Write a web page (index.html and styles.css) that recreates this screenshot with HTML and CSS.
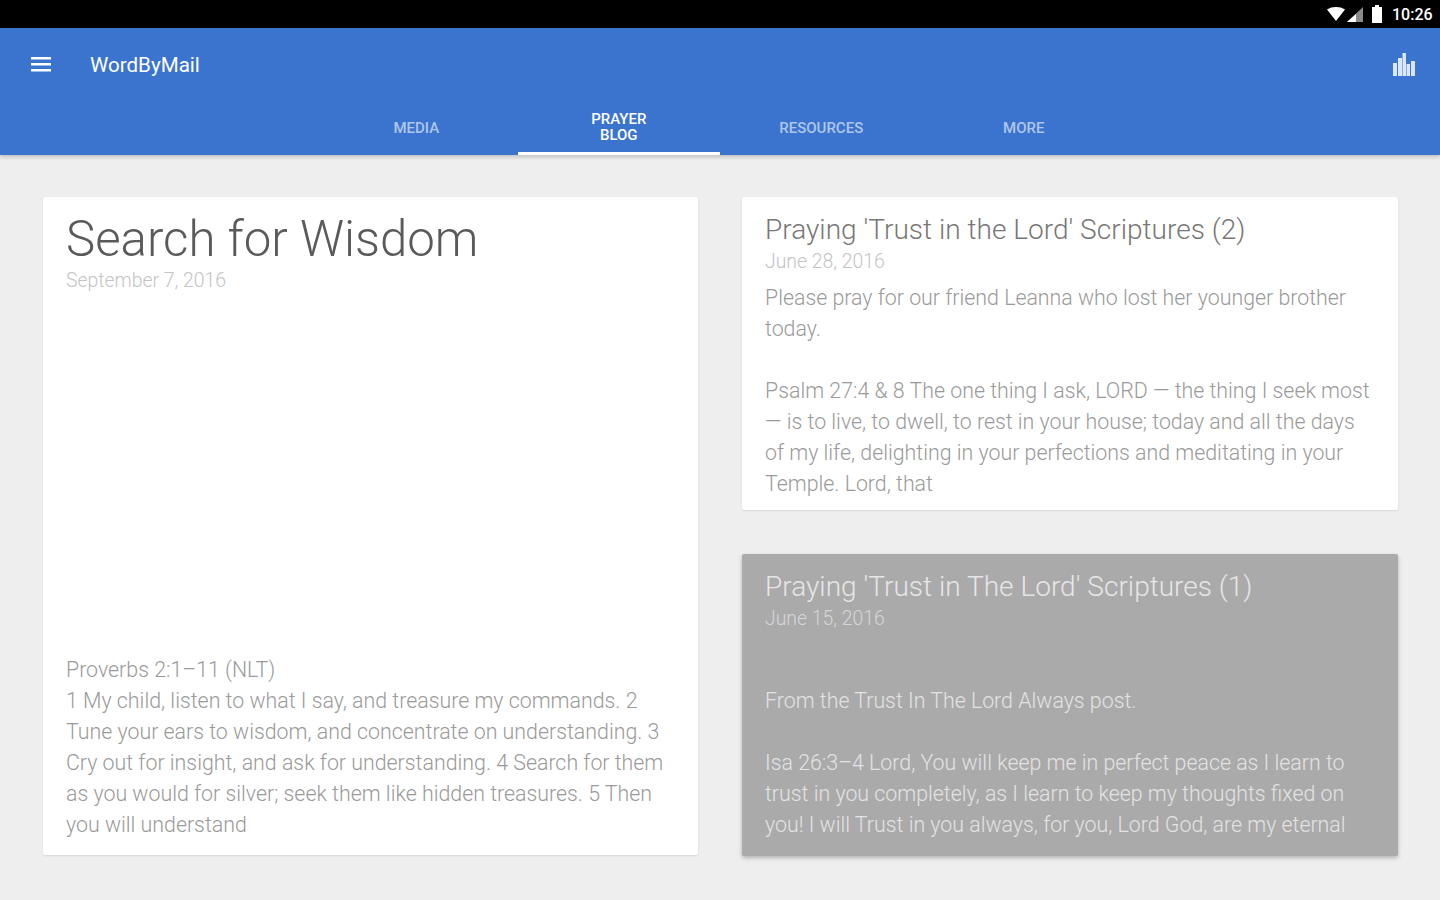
FILE: index.html
```html
<!DOCTYPE html>
<html lang="en">
<head>
  <meta charset="UTF-8" />
  <meta name="viewport" content="width=device-width, initial-scale=1.0" />
  <title>WordByMail</title>
  <link rel="stylesheet" href="styles.css">
</head>
<body>
  <div class="status-bar">
    <svg class="status-icon" width="18" height="14" viewBox="0 0 18 14"><path d="M0 2.500C5 -.8 13 -.8 18 2.500L9 14z" fill="#fff"/></svg>
    <svg class="status-icon" width="16" height="15" viewBox="0 0 16 15"><path d="M16 0V15H0z" fill="#8a8a8a"/><path d="M9 7V15H0L9 7z" fill="#fff"/></svg>
    <svg class="status-icon battery" width="12" height="18" viewBox="0 0 12 18"><path d="M1 2H4V0H8V2H11V18H1z" fill="#fff"/></svg>
    <span class="clock">10:26</span>
  </div>

  <header class="app-bar">
    <div class="toolbar">
      <svg class="menu-icon" width="22" height="18" viewBox="0 0 22 18"><path d="M1 1H21V3.500H1zM1 7H21V9.500H1zM1 13H21V15.500H1z" fill="#fff"/></svg>
      <span class="app-title">WordByMail</span>
      <svg class="chart-icon" width="24" height="24" viewBox="0 0 24 24"><path d="M1 10H5V23H1zM6 5H10V23H6zM10.500 0H14V23H10.500zM14.500 11H18V23H14.500zM19 8H23V23H19z" fill="#dbe6f6"/></svg>
    </div>
    <nav class="tabs">
      <a class="tab">MEDIA</a>
      <a class="tab active">PRAYER<br>BLOG</a>
      <a class="tab">RESOURCES</a>
      <a class="tab">MORE</a>
    </nav>
  </header>

  <main class="content">
    <article class="card card-large">
      <h1>Search for Wisdom</h1>
      <div class="date">September 7, 2016</div>
      <p class="excerpt excerpt-bottom">Proverbs 2:1–11 (NLT)<br>1 My child, listen to what I say, and treasure my commands. 2 Tune your ears to wisdom, and concentrate on understanding. 3 Cry out for insight, and ask for understanding. 4 Search for them as you would for silver; seek them like hidden treasures. 5 Then you will understand</p>
    </article>

    <div class="column">
      <article class="card card-small">
        <h2>Praying 'Trust in the Lord' Scriptures (2)</h2>
        <div class="date">June 28, 2016</div>
        <p class="excerpt">Please pray for our friend Leanna who lost her younger brother today.<br><br>Psalm 27:4 &amp; 8 The one thing I ask, LORD — the thing I seek most — is to live, to dwell, to rest in your house; today and all the days of my life, delighting in your perfections and meditating in your Temple. Lord, that</p>
      </article>

      <article class="card card-small pressed">
        <h2>Praying 'Trust in The Lord' Scriptures (1)</h2>
        <div class="date">June 15, 2016</div>
        <p class="excerpt"><br>From the Trust In The Lord Always post.<br><br>Isa 26:3–4 Lord, You will keep me in perfect peace as I learn to trust in you completely, as I learn to keep my thoughts fixed on you! I will Trust in you always, for you, Lord God, are my eternal</p>
      </article>
    </div>
  </main>
</body>
</html>
```

FILE: styles.css
```css
html, body {
  margin: 0;
  height: 900px;
  overflow: hidden;
}

body {
  font-family: Roboto, sans-serif;
  background: #eee;
}

.status-bar {
  height: 28px;
  background: #000;
  display: flex;
  justify-content: flex-end;
  align-items: center;
  padding-right: 7px;
  color: #fff;
}

.status-icon {
  margin-right: 2px;
}

.battery {
  margin: 0 9px 0 6px;
}

.clock {
  font-size: 16px;
  font-weight: 500;
  width: 41px;
}

.app-bar {
  height: 127px;
  background: #3a74cf;
  box-shadow: 0 2px 4px rgba(0, 0, 0, 0.2);
}

.toolbar {
  height: 73px;
  display: flex;
  align-items: center;
  padding: 0 24px 0 30px;
}

.app-title {
  margin-left: 38px;
  font-size: 20.600px;
  color: #fff;
}

.chart-icon {
  margin-left: auto;
}

.tabs {
  height: 54px;
  display: flex;
  padding-left: 315px;
}

.tab {
  width: 202.500px;
  display: flex;
  align-items: center;
  justify-content: center;
  text-align: center;
  font-size: 15px;
  font-weight: 500;
  line-height: 16px;
  color: rgba(255, 255, 255, 0.6);
  box-sizing: border-box;
}

.tab.active {
  color: #fff;
  border-bottom: 3px solid #fff;
}

.content {
  display: flex;
  gap: 44px;
  padding: 42px 42px 0 43px;
  align-items: flex-start;
}

.column {
  display: flex;
  flex-direction: column;
  gap: 44px;
}

.card {
  width: 656px;
  box-sizing: border-box;
  background: #fff;
  padding: 0 23px;
  border-radius: 2px;
  box-shadow: 0 1px 2px rgba(0, 0, 0, 0.1);
  overflow: hidden;
  color: #9a9a9a;
  font-weight: 300;
}

.card-large {
  height: 658px;
  display: flex;
  flex-direction: column;
}

.card-small {
  height: 313px;
}

.card-small.pressed {
  height: 302px;
  background: #aaa;
  color: #e3e3e3;
  box-shadow: 0 2px 4px rgba(0, 0, 0, 0.25);
}

h1 {
  margin: 12px 0 0;
  font-size: 49.200px;
  line-height: 60px;
  font-weight: 300;
  color: #5a5a5a;
}

h2 {
  margin: 13px 0 0;
  font-size: 28.060px;
  line-height: 40px;
  font-weight: 300;
  color: #777;
}

.pressed h2 {
  color: #e6e6e6;
}

.date {
  font-size: 19.400px;
  line-height: 24px;
  color: #c4c4c4;
}

.pressed .date {
  color: #d6d6d6;
}

.excerpt {
  margin: 8px 0 0;
  font-size: 21.350px;
  line-height: 31px;
}

.pressed .excerpt {
  margin-top: 23px;
}

.excerpt-bottom {
  margin-top: auto;
  margin-bottom: 15px;
}
```
